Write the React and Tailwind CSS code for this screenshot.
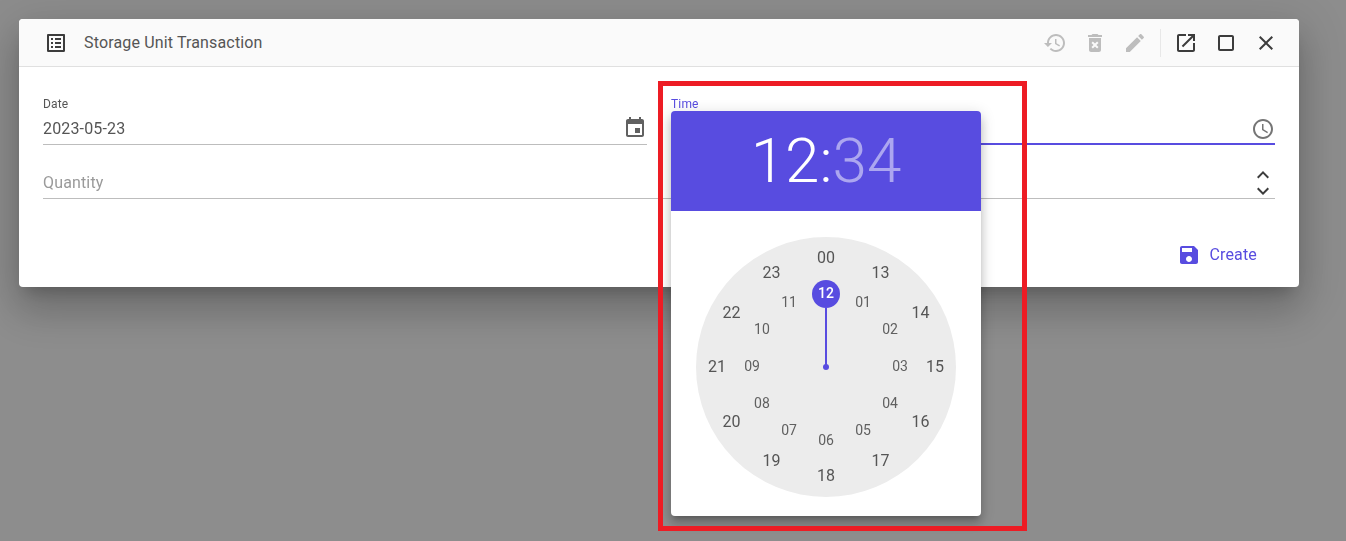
const Icon = ({ d, className = '' }) => (
  <svg viewBox="0 0 24 24" fill="currentColor" className={className}>
    <path d={d} />
  </svg>
);

const icons = {
  list: 'M19 5v14H5V5h14m1.1-2H3.9c-.5 0-.9.4-.9.9v16.2c0 .4.4.9.9.9h16.2c.4 0 .9-.5.9-.9V3.9c0-.5-.5-.9-.9-.9zM11 7h6v2h-6V7zm0 4h6v2h-6v-2zm0 4h6v2h-6zM7 7h2v2H7zm0 4h2v2H7zm0 4h2v2H7z',
  history: 'M13 3c-4.97 0-9 4.03-9 9H1l3.89 3.89.07.14L9 12H6c0-3.87 3.13-7 7-7s7 3.13 7 7-3.13 7-7 7c-1.93 0-3.68-.79-4.94-2.06l-1.42 1.42C8.27 19.99 10.51 21 13 21c4.97 0 9-4.03 9-9s-4.03-9-9-9zm-1 5v5l4.28 2.54.72-1.21-3.5-2.08V8H12z',
  trash: 'M6 19c0 1.1.9 2 2 2h8c1.1 0 2-.9 2-2V7H6v12zm2.46-7.12l1.41-1.41L12 12.59l2.12-2.12 1.41 1.41L13.41 14l2.12 2.12-1.41 1.41L12 15.41l-2.12 2.12-1.41-1.41L10.59 14l-2.13-2.12zM15.5 4l-1-1h-5l-1 1H5v2h14V4z',
  edit: 'M3 17.25V21h3.75L17.81 9.94l-3.75-3.75L3 17.25zM20.71 7.04c.39-.39.39-1.02 0-1.41l-2.34-2.34c-.39-.39-1.02-.39-1.41 0l-1.83 1.83 3.75 3.75 1.83-1.83z',
  open: 'M19 19H5V5h7V3H5c-1.11 0-2 .9-2 2v14c0 1.1.89 2 2 2h14c1.1 0 2-.9 2-2v-7h-2v7zM14 3v2h3.59l-9.83 9.83 1.41 1.41L19 6.41V10h2V3h-7z',
  square: 'M18 4H6c-1.1 0-2 .9-2 2v12c0 1.1.9 2 2 2h12c1.1 0 2-.9 2-2V6c0-1.1-.9-2-2-2zm0 14H6V6h12v12z',
  close: 'M19 6.41L17.59 5 12 10.59 6.41 5 5 6.41 10.59 12 5 17.59 6.41 19 12 13.41 17.59 19 19 17.59 13.41 12z',
  event: 'M17 12h-5v5h5v-5zM16 1v2H8V1H6v2H5c-1.11 0-1.99.9-1.99 2L3 19c0 1.1.89 2 2 2h14c1.1 0 2-.9 2-2V5c0-1.1-.9-2-2-2h-1V1h-2zm3 18H5V8h14v11z',
  clock: 'M11.99 2C6.47 2 2 6.48 2 12s4.47 10 9.99 10C17.52 22 22 17.52 22 12S17.52 2 11.99 2zM12 20c-4.42 0-8-3.58-8-8s3.58-8 8-8 8 3.58 8 8-3.58 8-8 8zm.5-13H11v6l5.25 3.15.75-1.23-4.5-2.67z',
  save: 'M17 3H5c-1.11 0-2 .9-2 2v14c0 1.1.89 2 2 2h14c1.1 0 2-.9 2-2V7l-4-4zm-5 16c-1.66 0-3-1.34-3-3s1.34-3 3-3 3 1.34 3 3-1.34 3-3 3zm3-10H5V5h10v4z',
  up: 'M12 8l-6 6 1.41 1.41L12 10.83l4.59 4.58L18 14z',
  down: 'M16.59 8.59L12 13.17 7.41 8.59 6 10l6 6 6-6z',
};

const outerHours = ['00', '13', '14', '15', '16', '17', '18', '19', '20', '21', '22', '23'];
const innerHours = ['12', '01', '02', '03', '04', '05', '06', '07', '08', '09', '10', '11'];

// center of a label in the dial's own 260x260 box
const spot = (i, radiusX, radiusY, centerY) => {
  const angle = (i * Math.PI) / 6;
  return {
    left: 130 + radiusX * Math.sin(angle),
    top: centerY - radiusY * Math.cos(angle),
  };
};

const ClockFace = () => (
  <div className="relative w-[260px] h-[260px] rounded-full bg-[#ececec]">
    <div className="absolute left-[129px] top-[71px] w-[2px] h-[59px] bg-[#584ce0]" />
    <div className="absolute left-[127px] top-[127px] w-[6px] h-[6px] rounded-full bg-[#584ce0]" />
    <div className="absolute left-[116px] top-[43px] w-[28px] h-[28px] rounded-full bg-[#584ce0]" />
    {outerHours.map((h, i) => (
      <span
        key={h}
        style={spot(i, 109, 109, 130)}
        className="absolute -translate-x-1/2 -translate-y-1/2 text-base leading-none text-[#555555]"
      >
        {h}
      </span>
    ))}
    {innerHours.map((h, i) => (
      <span
        key={h}
        style={spot(i, 74, 73.5, 129)}
        className={
          i === 0
            ? 'absolute -translate-x-1/2 -translate-y-1/2 text-sm leading-none font-medium text-white'
            : 'absolute -translate-x-1/2 -translate-y-1/2 text-sm leading-none text-[#606060]'
        }
      >
        {h}
      </span>
    ))}
  </div>
);

const TimePopup = () => (
  <div className="absolute left-[671px] top-[111px] w-[310px] h-[405px] rounded bg-white overflow-hidden transform-gpu shadow-[0_5px_5px_-3px_rgba(0,0,0,0.2),0_8px_10px_1px_rgba(0,0,0,0.14),0_3px_14px_2px_rgba(0,0,0,0.12)]">
    <div className="h-[100px] bg-[#584ce0] flex items-center justify-center text-[62px] font-light leading-none text-white">
      <span>12:</span>
      <span className="text-white/50">34</span>
    </div>
    <div className="pt-[26px] pl-[25px]">
      <ClockFace />
    </div>
  </div>
);

const Field = ({ label, value, icon, active }) => (
  <div>
    <div
      className={
        active
          ? 'text-xs leading-[14px] tracking-[0.15px] text-[#584ce0]'
          : 'text-xs leading-[14px] tracking-[0.15px] text-[#555555]'
      }
    >
      {label}
    </div>
    <div
      className={
        active
          ? 'h-[34px] flex items-center justify-between border-b-2 border-[#584ce0]'
          : 'h-[34px] flex items-center justify-between border-b border-[#bdbdbd]'
      }
    >
      <span className="pt-[2px] text-base tracking-[0.15px] text-[#555555]">{value}</span>
      <Icon d={icon} className={active ? 'mt-[3px] w-6 h-6 text-[#757575]' : 'mt-px w-6 h-6 text-[#616161]'} />
    </div>
  </div>
);

const HeaderButton = ({ icon, disabled }) => (
  <button className={disabled ? 'w-10 h-10 flex items-center justify-center text-[#bdbdbd]' : 'w-10 h-10 flex items-center justify-center text-[#3c3c3c]'}>
    <Icon d={icon} className="w-6 h-6" />
  </button>
);

export default function App() {
  return (
    <div className="relative h-screen overflow-hidden bg-[#8d8d8d] pt-[19px] pl-[19px] font-['Roboto',sans-serif]">
      <div className="w-[1280px] h-[268px] rounded bg-white transform-gpu shadow-[0_11px_15px_-7px_rgba(0,0,0,0.2),0_24px_38px_3px_rgba(0,0,0,0.14),0_9px_46px_8px_rgba(0,0,0,0.12)]">
        {/* Title bar */}
        <div className="h-[48px] flex items-center justify-between pl-[25px] pr-[13px] bg-[#fafafa] border-b border-[#e0e0e0] rounded-t">
          <div className="flex items-center">
            <Icon d={icons.list} className="w-6 h-6 text-[#3c3c3c]" />
            <span className="ml-[16px] text-base tracking-[0.15px] text-[#555555]">Storage Unit Transaction</span>
          </div>
          <div className="flex items-center">
            <HeaderButton icon={icons.history} disabled />
            <HeaderButton icon={icons.trash} disabled />
            <HeaderButton icon={icons.edit} disabled />
            <div className="w-px h-7 mx-[5px] bg-[#e8e8e8]" />
            <HeaderButton icon={icons.open} />
            <HeaderButton icon={icons.square} />
            <HeaderButton icon={icons.close} />
          </div>
        </div>

        {/* Form */}
        <div className="px-[24px] pt-[30px]">
          <div className="grid grid-cols-2 gap-x-[24px]">
            <Field label="Date" value="2023-05-23" icon={icons.event} />
            <Field label="Time" value="12:34" icon={icons.clock} active />
          </div>
          <div className="mt-[20px] h-[34px] flex items-center justify-between border-b border-[#bdbdbd]">
            <span className="pt-[2px] text-base tracking-[0.15px] text-[#9a9a9a]">Quantity</span>
            <div className="mt-[3px] flex flex-col items-center">
              <Icon d={icons.up} className="w-6 h-6 -mb-2 -mt-1 text-[#3c3c3c]" />
              <Icon d={icons.down} className="w-6 h-6 -mb-1 text-[#3c3c3c]" />
            </div>
          </div>
          <div className="mt-[38px] flex justify-end">
            <button className="h-9 flex items-center gap-[9px] pr-[18px] text-base tracking-[0.15px] text-[#584ce0]">
              <Icon d={icons.save} className="w-6 h-6" />
              Create
            </button>
          </div>
        </div>
      </div>

      <TimePopup />

      {/* Red highlight drawn over the screenshot */}
      <div className="absolute left-[658px] top-[81px] w-[369px] h-[450px] border-[5px] border-[#ed1c24] pointer-events-none" />
    </div>
  );
}
